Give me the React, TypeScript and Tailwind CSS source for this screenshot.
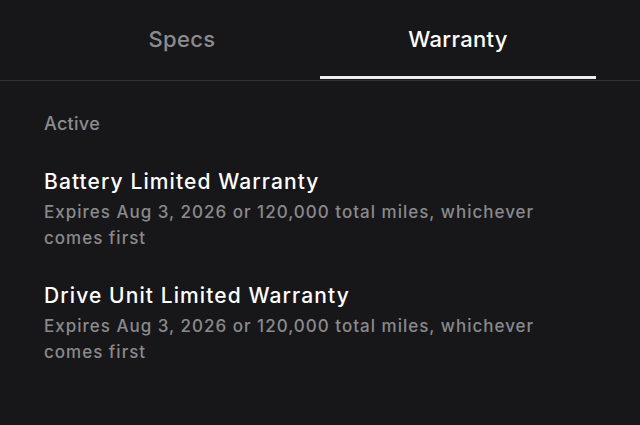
import { useState } from 'react'

const warranties = [
  { title: 'Battery Limited Warranty', detail: 'Expires Aug 3, 2026 or 120,000 total miles, whichever comes first' },
  { title: 'Drive Unit Limited Warranty', detail: 'Expires Aug 3, 2026 or 120,000 total miles, whichever comes first' },
]

export default function App() {
  const [tab, setTab] = useState<'specs' | 'warranty'>('warranty')

  return (
    <div className="w-[640px] h-[425px] bg-[#17171a] overflow-hidden font-['Inter',sans-serif] antialiased">
      {/* Tabs */}
      <div className="border-b border-[#333336]">
        <div className="flex px-[44px]">
          {(['specs', 'warranty'] as const).map((t) => (
            <button
              key={t}
              onClick={() => setTab(t)}
              className={`flex-1 h-[80px] flex items-center justify-center relative text-[22px] font-medium tracking-[0.3px] ${
                tab === t ? 'text-white' : 'text-[#8c8c8e]'
              }`}
            >
              <span className="-mt-[2px]">{t === 'specs' ? 'Specs' : 'Warranty'}</span>
              {tab === t && <span className="absolute left-0 right-0 bottom-[1px] h-[3px] bg-[#ededed]"></span>}
            </button>
          ))}
        </div>
      </div>

      {/* Content */}
      <div className="px-[44px] pt-[31px]">
        <p className="text-[18px] font-medium text-[#8c8c8e] leading-[24px] tracking-[0.3px]">Active</p>
        <div className="mt-[32px] flex flex-col gap-[31px]">
          {warranties.map((w) => (
            <div key={w.title}>
              <h2 className="text-[21px] font-medium text-white leading-[28px] tracking-[1.1px]">{w.title}</h2>
              <p className="mt-[3px] text-[17px] font-medium text-[#8a8a8c] leading-[26px] tracking-[1px] w-[505px]">
                {w.detail}
              </p>
            </div>
          ))}
        </div>
      </div>
    </div>
  )
}
